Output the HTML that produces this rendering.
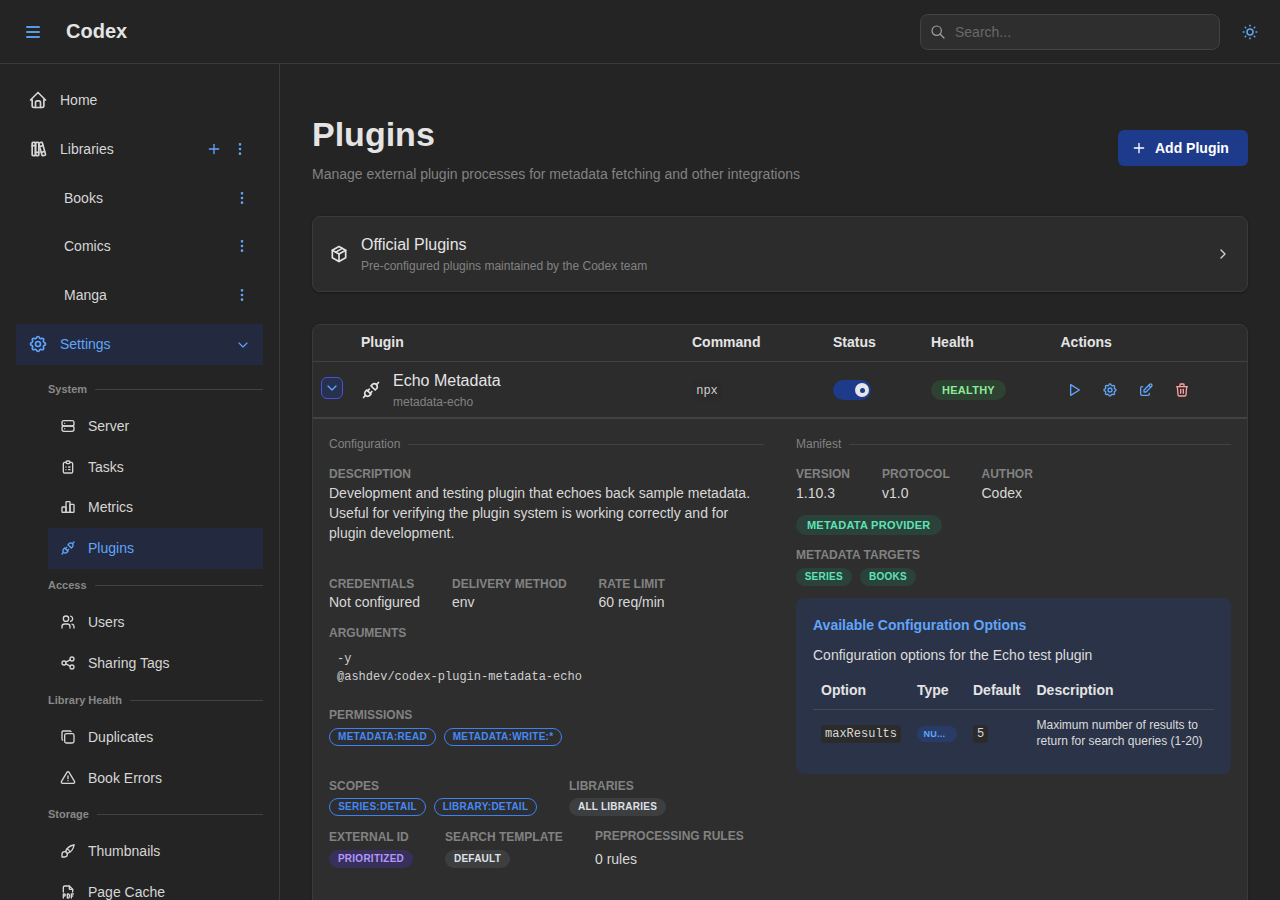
<!DOCTYPE html>
<html lang="en">
<head>
<meta charset="utf-8">
<title>Codex - Plugins</title>
<style>
*{box-sizing:border-box;margin:0;padding:0}
html,body{width:1280px;height:900px;overflow:hidden;background:#242424;color:#c9c9c9;font-family:"Liberation Sans",Arial,sans-serif;font-size:16px;line-height:1.55}
svg{display:block}
.ico{fill:none;stroke:currentColor;stroke-width:2;stroke-linecap:round;stroke-linejoin:round}
/* header */
.header{position:absolute;left:0;top:0;width:1280px;height:64px;border-bottom:1px solid #373A40;background:#242424}
.burger{position:absolute;left:25.700px;top:26px;width:14.600px;height:12px}
.burger i{position:absolute;left:0;width:14.600px;height:2px;background:#5a9ae2;border-radius:1px}
.logo{position:absolute;left:66px;top:15px;font-size:20px;font-weight:700;color:#e4e4e4;line-height:32px}
.search{position:absolute;left:920px;top:14px;width:300px;height:36px;border:1px solid #424242;border-radius:8px;background:#2e2e2e}
.search svg{position:absolute;left:9px;top:9px;color:#a0a0a0;stroke-width:1.8}
.search span{position:absolute;left:34px;top:0;line-height:34px;font-size:14px;color:#696969}
.sun{position:absolute;left:1241px;top:23px;color:#60a5fa}
/* sidebar */
.side{position:absolute;left:0;top:64px;width:280px;height:836px;border-right:1px solid #373A40;background:#242424}
.nav{position:absolute;left:16px;width:247px;height:41px;color:#d6d6d6;font-size:14px}
.nav svg{position:absolute;left:12px;top:10.25px}
.nav .lbl{position:absolute;left:44px;top:0;line-height:41px}
.nav.sub .lbl{left:48px}
.nav.active{background:#232a40;color:#60a5fa}
.dots{position:absolute;color:#60a5fa}
.sec{position:absolute;left:48px;width:215px;height:14px;font-size:11px;font-weight:700;color:#888;line-height:14px}
.sec span{position:relative;background:#242424;padding-right:8px;z-index:1}
.sec:after{content:"";position:absolute;left:0;right:0;top:7px;height:1px;background:#424242}
.nav2{position:absolute;left:48px;width:215px;height:41px;color:#d6d6d6;font-size:14px}
.nav2 svg{position:absolute;left:12px;top:12px}
.nav2 .lbl{position:absolute;left:40px;top:0;line-height:41px}
.nav2.active{background:#232a40;color:#60a5fa}
/* main */
.main{position:absolute;left:281px;top:65px;width:999px;height:835px;background:#242424}
h1{position:absolute;left:312px;top:112px;font-size:34px;font-weight:700;color:#e4e4e4;line-height:44px}
.subtitle{position:absolute;left:312px;top:163px;font-size:14px;color:#828282;line-height:22px}
.addbtn{position:absolute;left:1118px;top:130px;width:130px;height:36px;border-radius:6px;background:#1e3a8a;color:#fff;font-size:14px;font-weight:700;line-height:36px}
.addbtn svg{position:absolute;left:13px;top:10.25px}
.addbtn span{position:absolute;left:37px;top:0}
.card{position:absolute;left:312px;top:216px;width:936px;height:76px;border:1px solid #373A40;border-radius:8px;background:#2c2c2c;box-shadow:0 1px 3px rgba(0,0,0,.12),0 1px 2px rgba(0,0,0,.2)}
.table{position:absolute;left:312px;top:324px;width:936px;height:600px;border:1px solid #373A40;border-radius:8px 8px 0 0;background:#2c2c2c;box-shadow:0 1px 3px rgba(0,0,0,.12),0 1px 2px rgba(0,0,0,.2)}

.a{position:absolute}
.t{position:absolute;white-space:nowrap}
.lab{font-size:12px;font-weight:700;color:#828282;line-height:16px}
.val{font-size:14px;color:#d8d8d8;line-height:20px}
.th{font-size:14px;font-weight:700;color:#e4e4e4;line-height:20px}
.bdg{position:absolute;height:18px;border-radius:9px;font-size:10px;font-weight:700;line-height:18px;text-align:center;white-space:nowrap;letter-spacing:.25px}
.bdg.out{border:1px solid #3b82f6;color:#4589f6;line-height:16px}
.bdg.gray{background:#3d3e40;color:#dfe2e6}
.bdg.violet{background:#38305a;color:#b197fc}
.bdg.teal{background:#2a4239;color:#5ee3b8}
.bdg.green{background:#2d4231;color:#8ce99a}
.hr{position:absolute;height:1px;background:#424242}
.mono{font-family:"Liberation Mono",monospace}
</style>
</head>
<body>
<div class="header">
  <div class="burger"><i style="top:0"></i><i style="top:5px"></i><i style="top:10px"></i></div>
  <div class="logo">Codex</div>
  <div class="search">
    <svg class="ico" width="16" height="16" viewBox="0 0 24 24"><circle cx="10" cy="10" r="7"/><path d="M21 21l-6-6"/></svg>
    <span>Search...</span>
  </div>
  <svg class="ico sun" width="18" height="18" viewBox="0 0 24 24"><circle cx="12" cy="12" r="4"/><path d="M3 12h1m8-9v1m8 8h1m-9 8v1M5.600 5.600l.7.7m12.100-.7l-.7.7m0 11.400l.7.7m-12.100-.7l-.7.7"/></svg>
</div>
<div class="side">
<div class="nav " style="top:16px"><svg class="ico" width="20" height="20" viewBox="0 0 24 24"><path d="M5 12l-2 0l9 -9l9 9l-2 0"/><path d="M5 12v7a2 2 0 0 0 2 2h10a2 2 0 0 0 2 -2v-7"/><path d="M9 21v-6a2 2 0 0 1 2 -2h2a2 2 0 0 1 2 2v6"/></svg><span class="lbl">Home</span></div>
<div class="nav " style="top:65px"><svg class="ico" width="20" height="20" viewBox="0 0 24 24"><path d="M5 4m0 1a1 1 0 0 1 1 -1h2a1 1 0 0 1 1 1v14a1 1 0 0 1 -1 1h-2a1 1 0 0 1 -1 -1z"/><path d="M9 4m0 1a1 1 0 0 1 1 -1h2a1 1 0 0 1 1 1v14a1 1 0 0 1 -1 1h-2a1 1 0 0 1 -1 -1z"/><path d="M5 8h4"/><path d="M9 16h4"/><path d="M13.803 4.560l2.184 -.53c.562 -.135 1.133 .19 1.282 .732l3.695 13.418a1.020 1.020 0 0 1 -.634 1.219l-.133 .041l-2.184 .53c-.562 .135 -1.133 -.19 -1.282 -.732l-3.695 -13.418a1.020 1.020 0 0 1 .634 -1.219l.133 -.041z"/><path d="M14 9l4 -1"/><path d="M16 16l3.923 -.98"/></svg><span class="lbl">Libraries</span></div>
<div class="dots" style="left:206px;top:77px"><svg class="ico" width="16" height="16" viewBox="0 0 24 24"><path d="M12 5l0 14"/><path d="M5 12l14 0"/></svg></div>
<div class="dots" style="left:232px;top:77px"><svg class="ico" width="16" height="16" viewBox="0 0 24 24"><path d="M12 12m-1 0a1 1 0 1 0 2 0a1 1 0 1 0 -2 0"/><path d="M12 19m-1 0a1 1 0 1 0 2 0a1 1 0 1 0 -2 0"/><path d="M12 5m-1 0a1 1 0 1 0 2 0a1 1 0 1 0 -2 0"/></svg></div>
<div class="nav sub" style="top:114px"><span class="lbl">Books</span></div>
<div class="dots" style="left:234px;top:126px"><svg class="ico" width="16" height="16" viewBox="0 0 24 24"><path d="M12 12m-1 0a1 1 0 1 0 2 0a1 1 0 1 0 -2 0"/><path d="M12 19m-1 0a1 1 0 1 0 2 0a1 1 0 1 0 -2 0"/><path d="M12 5m-1 0a1 1 0 1 0 2 0a1 1 0 1 0 -2 0"/></svg></div>
<div class="nav sub" style="top:162px"><span class="lbl">Comics</span></div>
<div class="dots" style="left:234px;top:174px"><svg class="ico" width="16" height="16" viewBox="0 0 24 24"><path d="M12 12m-1 0a1 1 0 1 0 2 0a1 1 0 1 0 -2 0"/><path d="M12 19m-1 0a1 1 0 1 0 2 0a1 1 0 1 0 -2 0"/><path d="M12 5m-1 0a1 1 0 1 0 2 0a1 1 0 1 0 -2 0"/></svg></div>
<div class="nav sub" style="top:211px"><span class="lbl">Manga</span></div>
<div class="dots" style="left:234px;top:223px"><svg class="ico" width="16" height="16" viewBox="0 0 24 24"><path d="M12 12m-1 0a1 1 0 1 0 2 0a1 1 0 1 0 -2 0"/><path d="M12 19m-1 0a1 1 0 1 0 2 0a1 1 0 1 0 -2 0"/><path d="M12 5m-1 0a1 1 0 1 0 2 0a1 1 0 1 0 -2 0"/></svg></div>
<div class="nav active" style="top:260px"><svg class="ico" width="20" height="20" viewBox="0 0 24 24"><path d="M10.325 4.317c.426 -1.756 2.924 -1.756 3.350 0a1.724 1.724 0 0 0 2.573 1.066c1.543 -.940 3.310 .826 2.370 2.370a1.724 1.724 0 0 0 1.065 2.572c1.756 .426 1.756 2.924 0 3.350a1.724 1.724 0 0 0 -1.066 2.573c.940 1.543 -.826 3.310 -2.370 2.370a1.724 1.724 0 0 0 -2.572 1.065c-.426 1.756 -2.924 1.756 -3.350 0a1.724 1.724 0 0 0 -2.573 -1.066c-1.543 .940 -3.310 -.826 -2.370 -2.370a1.724 1.724 0 0 0 -1.065 -2.572c-1.756 -.426 -1.756 -2.924 0 -3.350a1.724 1.724 0 0 0 1.066 -2.573c-.940 -1.543 .826 -3.310 2.370 -2.370c1 .608 2.296 .070 2.572 -1.065z"/><path d="M9 12a3 3 0 1 0 6 0a3 3 0 0 0 -6 0"/></svg><span class="lbl">Settings</span></div>
<div class="dots" style="left:235px;top:273px;color:#60a5fa"><svg class="ico" style="stroke-width:1.6" width="16" height="16" viewBox="0 0 24 24"><path d="M6 9l6 6l6 -6"/></svg></div>
<div class="sec" style="top:318px"><span>System</span></div>
<div class="nav2 " style="top:342px"><svg class="ico" width="16" height="16" viewBox="0 0 24 24"><path d="M3 4m0 3a3 3 0 0 1 3 -3h12a3 3 0 0 1 3 3v2a3 3 0 0 1 -3 3h-12a3 3 0 0 1 -3 -3z"/><path d="M3 12m0 3a3 3 0 0 1 3 -3h12a3 3 0 0 1 3 3v2a3 3 0 0 1 -3 3h-12a3 3 0 0 1 -3 -3z"/><path d="M7 8l0 .01"/><path d="M7 16l0 .01"/></svg><span class="lbl">Server</span></div>
<div class="nav2 " style="top:383px"><svg class="ico" width="16" height="16" viewBox="0 0 24 24"><path d="M9 5h-2a2 2 0 0 0 -2 2v12a2 2 0 0 0 2 2h10a2 2 0 0 0 2 -2v-12a2 2 0 0 0 -2 -2h-2"/><path d="M9 3m0 2a2 2 0 0 1 2 -2h2a2 2 0 0 1 2 2v0a2 2 0 0 1 -2 2h-2a2 2 0 0 1 -2 -2z"/><path d="M9 12l.01 0"/><path d="M13 12l2 0"/><path d="M9 16l.01 0"/><path d="M13 16l2 0"/></svg><span class="lbl">Tasks</span></div>
<div class="nav2 " style="top:423px"><svg class="ico" width="16" height="16" viewBox="0 0 24 24"><path d="M3 13a1 1 0 0 1 1 -1h4a1 1 0 0 1 1 1v6a1 1 0 0 1 -1 1h-4a1 1 0 0 1 -1 -1z"/><path d="M15 9a1 1 0 0 1 1 -1h4a1 1 0 0 1 1 1v10a1 1 0 0 1 -1 1h-4a1 1 0 0 1 -1 -1z"/><path d="M9 5a1 1 0 0 1 1 -1h4a1 1 0 0 1 1 1v14a1 1 0 0 1 -1 1h-4a1 1 0 0 1 -1 -1z"/><path d="M4 20h14"/></svg><span class="lbl">Metrics</span></div>
<div class="nav2 active" style="top:464px"><svg class="ico" width="16" height="16" viewBox="0 0 24 24"><path d="M7 12l5 5l-1.500 1.500a3.536 3.536 0 1 1 -5 -5l1.500 -1.500z"/><path d="M17 12l-5 -5l1.500 -1.500a3.536 3.536 0 1 1 5 5l-1.500 1.500z"/><path d="M3 21l2.500 -2.500"/><path d="M18.500 5.500l2.500 -2.500"/><path d="M10 11l-2 2"/><path d="M13 14l-2 2"/></svg><span class="lbl">Plugins</span></div>
<div class="sec" style="top:514px"><span>Access</span></div>
<div class="nav2 " style="top:538px"><svg class="ico" width="16" height="16" viewBox="0 0 24 24"><path d="M9 7m-4 0a4 4 0 1 0 8 0a4 4 0 1 0 -8 0"/><path d="M3 21v-2a4 4 0 0 1 4 -4h4a4 4 0 0 1 4 4v2"/><path d="M16 3.130a4 4 0 0 1 0 7.750"/><path d="M21 21v-2a4 4 0 0 0 -3 -3.850"/></svg><span class="lbl">Users</span></div>
<div class="nav2 " style="top:579px"><svg class="ico" width="16" height="16" viewBox="0 0 24 24"><path d="M6 12m-3 0a3 3 0 1 0 6 0a3 3 0 1 0 -6 0"/><path d="M18 6m-3 0a3 3 0 1 0 6 0a3 3 0 1 0 -6 0"/><path d="M18 18m-3 0a3 3 0 1 0 6 0a3 3 0 1 0 -6 0"/><path d="M8.700 10.700l6.600 -3.400"/><path d="M8.700 13.300l6.600 3.400"/></svg><span class="lbl">Sharing Tags</span></div>
<div class="sec" style="top:629px"><span>Library Health</span></div>
<div class="nav2 " style="top:653px"><svg class="ico" width="16" height="16" viewBox="0 0 24 24"><path d="M7 7m0 2.667a2.667 2.667 0 0 1 2.667 -2.667h8.666a2.667 2.667 0 0 1 2.667 2.667v8.666a2.667 2.667 0 0 1 -2.667 2.667h-8.666a2.667 2.667 0 0 1 -2.667 -2.667z"/><path d="M4.012 16.737a2.005 2.005 0 0 1 -1.012 -1.737v-10c0 -1.100 .9 -2 2 -2h10c.75 0 1.158 .385 1.500 1"/></svg><span class="lbl">Duplicates</span></div>
<div class="nav2 " style="top:694px"><svg class="ico" width="16" height="16" viewBox="0 0 24 24"><path d="M12 9v4"/><path d="M10.363 3.591l-8.106 13.534a1.914 1.914 0 0 0 1.636 2.871h16.214a1.914 1.914 0 0 0 1.636 -2.870l-8.106 -13.536a1.914 1.914 0 0 0 -3.274 0z"/><path d="M12 16h.01"/></svg><span class="lbl">Book Errors</span></div>
<div class="sec" style="top:743px"><span>Storage</span></div>
<div class="nav2 " style="top:767px"><svg class="ico" width="16" height="16" viewBox="0 0 24 24"><path d="M3 21v-4a4 4 0 1 1 4 4h-4"/><path d="M21 3a16 16 0 0 0 -12.800 10.200"/><path d="M21 3a16 16 0 0 1 -10.200 12.800"/><path d="M10.600 9a9 9 0 0 1 4.400 4.400"/></svg><span class="lbl">Thumbnails</span></div>
<div class="nav2 " style="top:808px"><svg class="ico" width="16" height="16" viewBox="0 0 24 24"><path d="M14 3v4a1 1 0 0 0 1 1h4"/><path d="M5 12v-7a2 2 0 0 1 2 -2h7l5 5v4"/><path d="M5 18h1.500a1.500 1.500 0 0 0 0 -3h-1.500v6"/><path d="M17 18h2"/><path d="M20 15h-3v6"/><path d="M11 15v6h1a2 2 0 0 0 2 -2v-2a2 2 0 0 0 -2 -2h-1z"/></svg><span class="lbl">Page Cache</span></div>
</div>
<h1>Plugins</h1>
<div class="subtitle">Manage external plugin processes for metadata fetching and other integrations</div>
<div class="addbtn"><svg class="ico" width="16" height="16" viewBox="0 0 24 24"><path d="M12 5v14M5 12h14"/></svg><span>Add Plugin</span></div>
<div class="card"></div>
<div class="table"></div>
<svg class="ico a" style="left:329.0px;top:244.0px;color:#e4e4e4" width="20" height="20" viewBox="0 0 24 24"><path d="M12 3l8 4.500l0 9l-8 4.500l-8 -4.500l0 -9l8 -4.500"/><path d="M12 12l8 -4.500"/><path d="M12 12l0 9"/><path d="M12 12l-8 -4.500"/><path d="M16 5.250l-8 4.500"/></svg>
<div class="t" style="left:361px;top:232px;font-size:16px;line-height:25px;color:#e4e4e4">Official Plugins</div>
<div class="t" style="left:361px;top:258px;font-size:12px;line-height:17px;color:#828282">Pre-configured plugins maintained by the Codex team</div>
<svg class="ico a" style="left:1215.0px;top:246.0px;color:#d0d0d0" width="16" height="16" viewBox="0 0 24 24"><path d="M9 6l6 6l-6 6"/></svg>
<div class="t th" style="left:361px;top:332px">Plugin</div>
<div class="t th" style="left:692px;top:332px">Command</div>
<div class="t th" style="left:833px;top:332px">Status</div>
<div class="t th" style="left:931px;top:332px">Health</div>
<div class="t th" style="left:1060.500px;top:332px">Actions</div>
<div class="hr" style="left:313px;top:361px;width:934px"></div>
<div class="a" style="left:321px;top:377px;width:22px;height:22px;border:1.5px solid #4c51d8;border-radius:6px;background:#26304f"></div>
<svg class="ico a" style="left:324px;top:380px;color:#60a5fa" width="16" height="16" viewBox="0 0 24 24"><path d="M6 9l6 6l6 -6"/></svg>
<svg class="ico a" style="left:361.0px;top:380.0px;color:#e4e4e4" width="20" height="20" viewBox="0 0 24 24"><path d="M7 12l5 5l-1.500 1.500a3.536 3.536 0 1 1 -5 -5l1.500 -1.500z"/><path d="M17 12l-5 -5l1.500 -1.500a3.536 3.536 0 1 1 5 5l-1.500 1.500z"/><path d="M3 21l2.500 -2.500"/><path d="M18.500 5.500l2.500 -2.500"/><path d="M10 11l-2 2"/><path d="M13 14l-2 2"/></svg>
<div class="t" style="left:393px;top:368px;font-size:16px;line-height:25px;color:#e4e4e4">Echo Metadata</div>
<div class="t" style="left:393px;top:394px;font-size:12px;line-height:17px;color:#828282">metadata-echo</div>
<div class="t mono" style="left:692px;top:380.500px;width:30px;height:20px;border-radius:4px;background:#2a2a2a;font-size:12px;line-height:20px;color:#d0d0d0;text-align:center">npx</div>
<div class="a" style="left:833px;top:380px;width:38px;height:20px;border-radius:10px;background:#1e3a8a"></div>
<div class="a" style="left:855px;top:383px;width:14px;height:14px;border-radius:7px;background:#e6e6e6"></div>
<div class="a" style="left:859.500px;top:387.500px;width:5px;height:5px;border-radius:3px;background:#1e3a8a"></div>
<div class="bdg green" style="left:931px;top:380px;width:75px;height:20px;line-height:20px;font-size:11px;border-radius:10px">HEALTHY</div>
<svg class="ico a" style="left:1065.600px;top:382px;color:#60a5fa" width="16" height="16" viewBox="0 0 24 24"><path d="M7 4v16l13 -8z"/></svg>
<svg class="ico a" style="left:1102.0px;top:382.0px;color:#60a5fa" width="16" height="16" viewBox="0 0 24 24"><path d="M10.325 4.317c.426 -1.756 2.924 -1.756 3.350 0a1.724 1.724 0 0 0 2.573 1.066c1.543 -.940 3.310 .826 2.370 2.370a1.724 1.724 0 0 0 1.065 2.572c1.756 .426 1.756 2.924 0 3.350a1.724 1.724 0 0 0 -1.066 2.573c.940 1.543 -.826 3.310 -2.370 2.370a1.724 1.724 0 0 0 -2.572 1.065c-.426 1.756 -2.924 1.756 -3.350 0a1.724 1.724 0 0 0 -2.573 -1.066c-1.543 .940 -3.310 -.826 -2.370 -2.370a1.724 1.724 0 0 0 -1.065 -2.572c-1.756 -.426 -1.756 -2.924 0 -3.350a1.724 1.724 0 0 0 1.066 -2.573c-.940 -1.543 .826 -3.310 2.370 -2.370c1 .608 2.296 .070 2.572 -1.065z"/><path d="M9 12a3 3 0 1 0 6 0a3 3 0 0 0 -6 0"/></svg>
<svg class="ico a" style="left:1138.0px;top:382.0px;color:#60a5fa" width="16" height="16" viewBox="0 0 24 24"><path d="M7 7h-1a2 2 0 0 0 -2 2v9a2 2 0 0 0 2 2h9a2 2 0 0 0 2 -2v-1"/><path d="M20.385 6.585a2.100 2.100 0 0 0 -2.970 -2.970l-8.415 8.385v3h3l8.385 -8.415z"/><path d="M16 5l3 3"/></svg>
<svg class="ico a" style="left:1174.0px;top:382px;color:#ffa0a0" width="16" height="16" viewBox="0 0 24 24"><path d="M4 7l16 0"/><path d="M10 11l0 6"/><path d="M14 11l0 6"/><path d="M5 7l1 12a2 2 0 0 0 2 2h8a2 2 0 0 0 2 -2l1 -12"/><path d="M9 7v-3a1 1 0 0 1 1 -1h4a1 1 0 0 1 1 1v3"/></svg>
<div class="a" style="left:313px;top:417px;width:934px;height:483px;background:#2e2e2e;border-top:2px solid #424242"></div>
<div class="t" style="left:329px;top:436px;font-size:12px;line-height:16px;color:#828282">Configuration</div>
<div class="hr" style="left:408px;top:444px;width:356px"></div>
<div class="t lab" style="left:329px;top:466px">DESCRIPTION</div>
<div class="a val" style="left:329px;top:483px;width:436px;line-height:20px">Development and testing plugin that echoes back sample metadata. Useful for verifying the plugin system is working correctly and for plugin development.</div>
<div class="t lab" style="left:329px;top:576px">CREDENTIALS</div>
<div class="t val" style="left:329px;top:592px">Not configured</div>
<div class="t lab" style="left:452px;top:576px">DELIVERY METHOD</div>
<div class="t val" style="left:452px;top:592px">env</div>
<div class="t lab" style="left:598.5px;top:576px">RATE LIMIT</div>
<div class="t val" style="left:598.5px;top:592px">60 req/min</div>
<div class="t lab" style="left:329px;top:625px">ARGUMENTS</div>
<div class="t mono" style="left:337px;top:650px;font-size:12px;line-height:18px;color:#d0d0d0">-y<br>@ashdev/codex-plugin-metadata-echo</div>
<div class="t lab" style="left:329px;top:707px">PERMISSIONS</div>
<div class="bdg out" style="left:329px;top:728px;width:107px">METADATA:READ</div>
<div class="bdg out" style="left:444px;top:728px;width:118px">METADATA:WRITE:*</div>
<div class="t lab" style="left:329px;top:778px">SCOPES</div>
<div class="bdg out" style="left:329px;top:798px;width:97px">SERIES:DETAIL</div>
<div class="bdg out" style="left:434px;top:798px;width:103px">LIBRARY:DETAIL</div>
<div class="t lab" style="left:569px;top:778px">LIBRARIES</div>
<div class="bdg gray" style="left:569px;top:798px;width:97px">ALL LIBRARIES</div>
<div class="t lab" style="left:329px;top:829px">EXTERNAL ID</div>
<div class="t lab" style="left:445px;top:829px">SEARCH TEMPLATE</div>
<div class="t lab" style="left:595px;top:828px">PREPROCESSING RULES</div>
<div class="bdg violet" style="left:329px;top:850px;width:84px">PRIORITIZED</div>
<div class="bdg gray" style="left:445px;top:850px;width:65px">DEFAULT</div>
<div class="t val" style="left:595px;top:849px">0 rules</div>
<div class="t" style="left:796px;top:436px;font-size:12px;line-height:16px;color:#828282">Manifest</div>
<div class="hr" style="left:849px;top:444px;width:382px"></div>
<div class="t lab" style="left:796px;top:466px">VERSION</div>
<div class="t val" style="left:796px;top:483px">1.10.3</div>
<div class="t lab" style="left:882px;top:466px">PROTOCOL</div>
<div class="t val" style="left:882px;top:483px">v1.0</div>
<div class="t lab" style="left:981.5px;top:466px">AUTHOR</div>
<div class="t val" style="left:981.5px;top:483px">Codex</div>
<div class="bdg teal" style="left:796px;top:515px;width:145.500px;height:20px;line-height:20px;font-size:11px;border-radius:10px">METADATA PROVIDER</div>
<div class="t lab" style="left:796px;top:547px">METADATA TARGETS</div>
<div class="bdg teal" style="left:796px;top:568px;width:55.500px">SERIES</div>
<div class="bdg teal" style="left:860px;top:568px;width:56px">BOOKS</div>
<div class="a" style="left:796px;top:598px;width:435px;height:175.500px;border-radius:8px;background:#2b3348"></div>
<div class="t" style="left:813px;top:615px;font-size:14px;font-weight:700;line-height:20px;color:#60a5fa">Available Configuration Options</div>
<div class="t val" style="left:813px;top:645px;color:#dcdcdc">Configuration options for the Echo test plugin</div>
<div class="t th" style="left:821px;top:680px">Option</div>
<div class="t th" style="left:917px;top:680px">Type</div>
<div class="t th" style="left:973px;top:680px">Default</div>
<div class="t th" style="left:1036.5px;top:680px">Description</div>
<div class="hr" style="left:813px;top:709px;width:401px;background:#484a50"></div>
<div class="t mono" style="left:821px;top:725px;width:80px;height:17.500px;border-radius:4px;background:#2b2b2b;font-size:12px;line-height:19.500px;color:#d8d8d8;text-align:center">maxResults</div>
<div class="bdg" style="left:917px;top:725.750px;width:40px;height:16px;line-height:16px;font-size:9px;border-radius:8px;background:#293c68;color:#60a5fa;text-align:left;padding-left:6.500px">NU...</div>
<div class="t mono" style="left:973px;top:725px;width:15px;height:17.500px;border-radius:4px;background:#2b2b2b;font-size:12px;line-height:19.500px;color:#d8d8d8;text-align:center">5</div>
<div class="a" style="left:1036.500px;top:717px;width:180px;font-size:12px;line-height:16px;color:#dcdcdc">Maximum number of results to return for search queries (1-20)</div>
</body>
</html>
